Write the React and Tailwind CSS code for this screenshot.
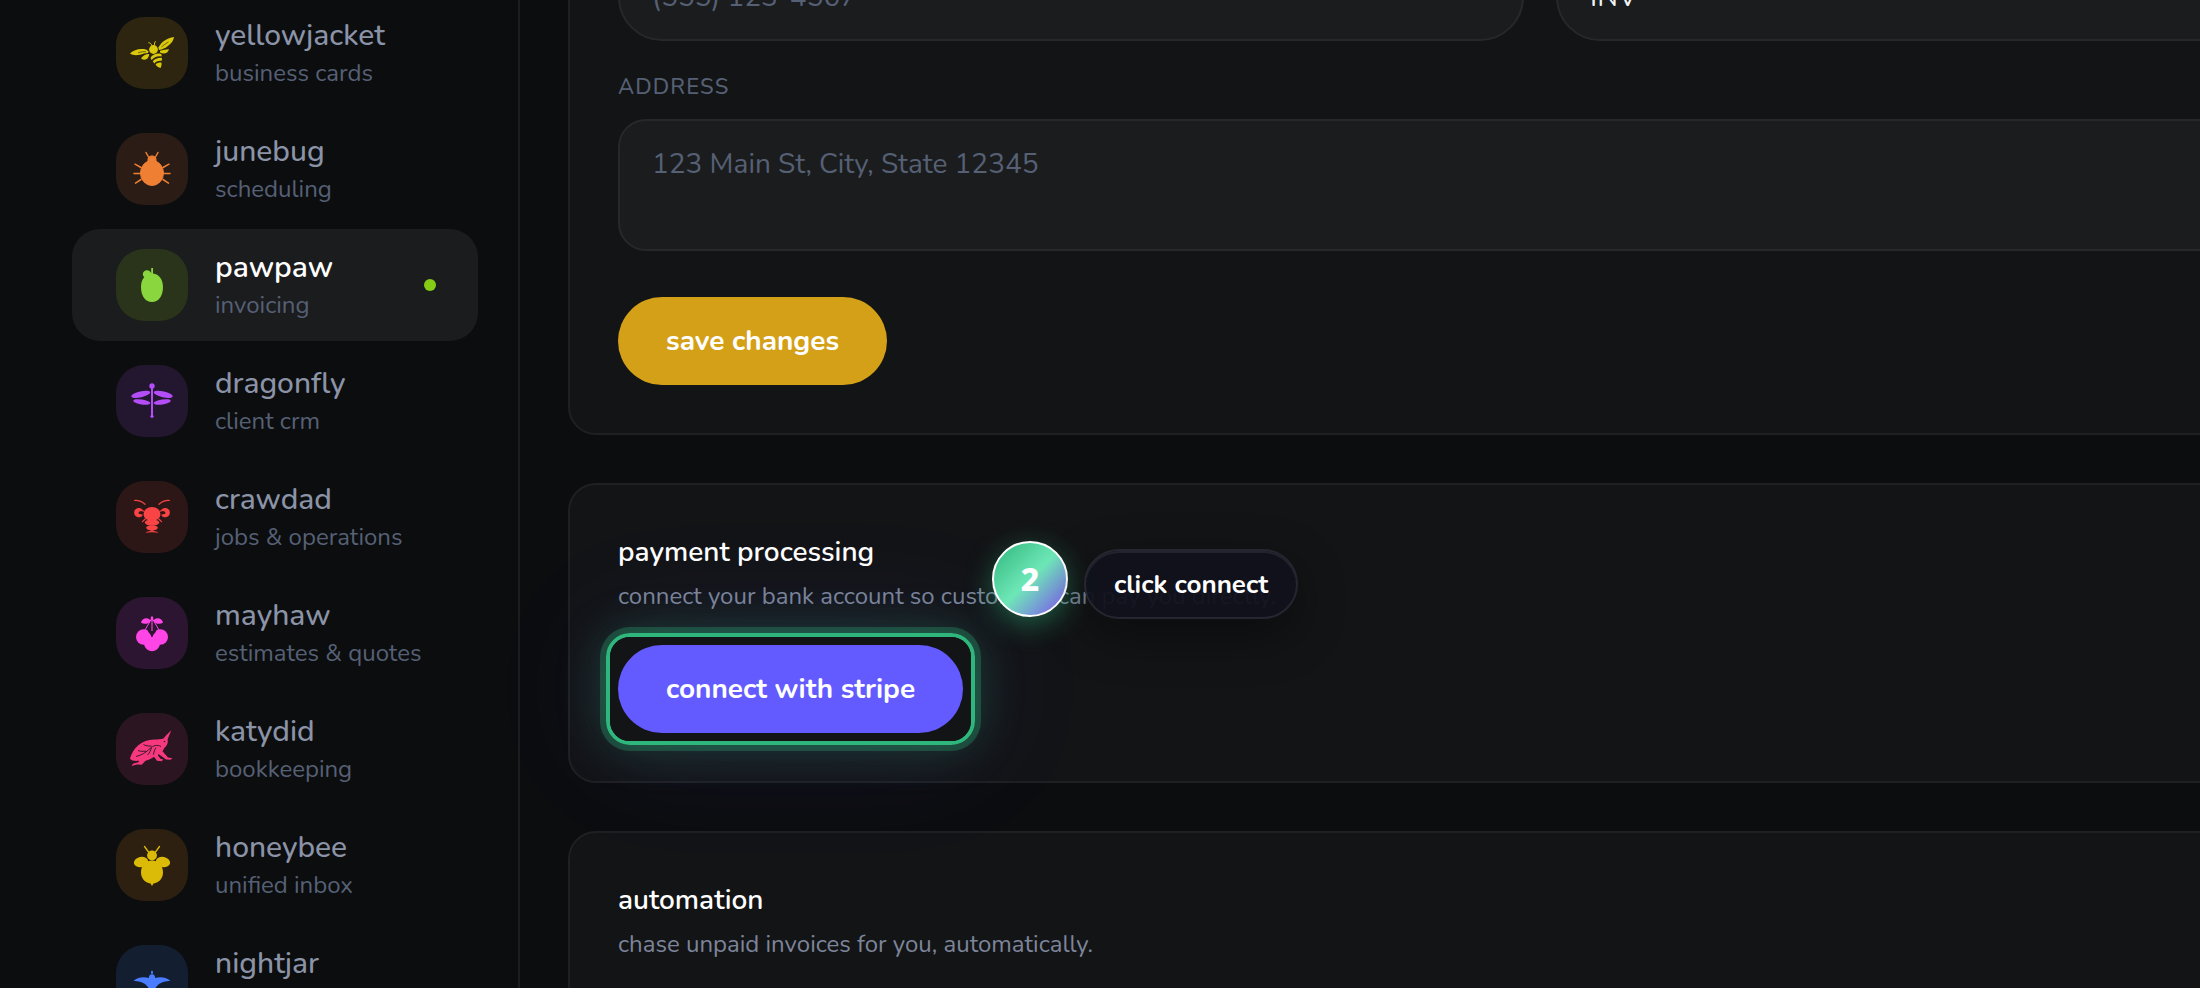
const YellowjacketIcon = () => (
  <svg viewBox="0 0 44 44" className="size-11 fill-[#d9c80c]">
    <circle cx="23.5" cy="18.5" r="4.4" />
    <path d="M0 22.5c4-3.600 9-5.200 16-4l2.500 1.800-.5 1.700-4 .4c-5 2-10.500 2.600-14 .1z" />
    <path d="M11 27.600c1.500-2.800 4.500-4.400 8.200-4.500-.2 4-3.500 7.700-8.200 4.500z" />
    <path d="M44 6c-7 1-12.500 4.500-15.600 10.600l.6 2.400 2.600-.6C37.500 16.200 43 12 44 6z" />
    <path d="M30 19.800c3-.8 6.500-1.600 9-1.500-1 4.200-5.200 5.400-9 3.200z" />
    <path d="M20.500 27c1.500-3 6-5 10-4.200 1.200.6 1.400 1.500 1 2.600-4-.7-7.500.6-9.900 3.600z" />
    <path d="M22.800 30.200c1.700-2.300 5-3.600 8.900-3.400.5 1 .4 2-.1 3-3-.3-5.600.5-7.300 2.700z" />
    <path d="M25.600 33.300c1.300-1.400 3.200-2 5.800-1.900.4 2 0 4-.9 5.500-2-.1-4-1.500-4.900-3.600z" />
    <path d="M22 15c-.5-2-1.600-3-3.600-3.400M24.500 14.500c-.2-2 .2-3.400 1.100-4.300" fill="none" stroke="#d9c80c" />
    <path d="M8 21.800c3-1 5.500-1.300 8-1M31.500 16c2.200-2 4.500-3.800 7-5" fill="none" stroke="#2d2510" strokeWidth=".6" />
  </svg>
);

const JunebugIcon = () => (
  <svg viewBox="0 0 44 44" className="size-11 fill-[#ee7f33] stroke-[#ee7f33]">
    <ellipse cx="22" cy="26" rx="11.500" ry="12.500" />
    <path d="M18 15v-2.500c0-2.200 1.600-3.600 4-3.600s4 1.400 4 3.600V15z" />
    <g fill="none" strokeWidth="1.500" strokeLinecap="round">
      <path d="M18.500 10l-2.500-4.500M25.500 10L28 5.500M11 20.500l-6-3.300M33 20.500l6-3.300M10.500 26.500H4M33.500 26.500H40M11 32.500l-5.500 3.600M33 32.500l5.500 3.600" />
    </g>
  </svg>
);

const PawpawIcon = () => (
  <svg viewBox="0 0 44 44" className="size-11 fill-[#8ad63f]">
    <path d="M21.200 10V5h1.800v5.500c6 .6 10 6 10 13.500 0 9-4.500 15-11 15s-11-6-11-15c0-4.200 1.200-7.600 3.300-10-1.800-1-2-4-.3-5.500 2.200-2.300 6-1.600 7.200 1.500z" />
  </svg>
);

const DragonflyIcon = () => (
  <svg viewBox="0 0 44 44" className="size-11 fill-[#b44df8]">
    <circle cx="22" cy="7" r="2.700" />
    <rect x="21" y="7" width="2" height="31" />
    <circle cx="22" cy="37.300" r="1.600" />
    <ellipse cx="10.800" cy="15.300" rx="9.800" ry="3" transform="rotate(-13 10.800 15.300)" />
    <ellipse cx="33.200" cy="15.300" rx="9.800" ry="3" transform="rotate(13 33.200 15.300)" />
    <ellipse cx="11.800" cy="23" rx="8.700" ry="2.500" transform="rotate(9 11.800 23)" />
    <ellipse cx="32.200" cy="23" rx="8.700" ry="2.500" transform="rotate(-9 32.200 23)" />
  </svg>
);

const CrawdadIcon = () => (
  <svg viewBox="0 0 44 44" className="size-11 fill-[#f84444]">
    <ellipse cx="22" cy="19" rx="8.500" ry="7" />
    <ellipse cx="22" cy="27.500" rx="7.200" ry="3.100" />
    <ellipse cx="22" cy="32.800" rx="5.800" ry="2.600" />
    <path d="M22 35l2.500 1.200c2 .2 3.300.7 4 1.500-4-.7-9-.7-13 0 .7-.8 2-1.300 4-1.500z" />
    <path d="M13 15.500a4.700 4.700 0 1 0 0 4.200l-4.300-1 .1-2z" />
    <path d="M31 15.500a4.700 4.700 0 1 1 0 4.200l4.300-1-.1-2z" />
    <g fill="none" stroke="#f84444" strokeWidth="1.200" strokeLinecap="round">
      <path d="M15 9.300C12 6.500 8.500 5.200 4.500 5.500M29 9.300c3-2.800 6.500-4.100 10.500-3.800M15.200 24l-2.700 2.700M28.800 24l2.700 2.700M12 15.600l2 .6M32 15.600l-2 .6" />
    </g>
  </svg>
);

const MayhawIcon = () => (
  <svg viewBox="0 0 44 44" className="size-11 fill-[#ff45e5]">
    <circle cx="13.700" cy="26" r="7.700" />
    <circle cx="30.300" cy="26" r="7.700" />
    <path d="M14 26h16v6c0 4.500-3.500 8.200-8 8.200S14 36.500 14 32z" />
    <path d="M18 20.500l4 5 4-5-.5-1.500h-7z" fill="#2b1530" />
    <path d="M11 11.800c.5-3.800 5-5.600 8.500-3.600l1 2c-2 2.600-6 3.500-9.500 1.600zM33 11.800c-.5-3.800-5-5.600-8.500-3.600l-1 2c2 2.600 6 3.500 9.500 1.600z" />
    <path d="M21 5.500h2l.5 4h-3z" />
    <path d="M21 8h2v12h-2z" fillOpacity=".55" />
    <path d="M20.800 9L15 19M23.200 9L29 19" stroke="#ff45e5" fill="none" />
  </svg>
);

const KatydidIcon = () => (
  <svg viewBox="0 0 44 44" className="size-11 fill-[#f6397f]">
    <path d="M0 31.500C3 21 12 12.500 24 12.500c4 0 7-.3 9.500-1L36 8.500l5.300-5.300-3.800 9.300c1 3.500-.6 6.500-3 8.300l-2 3.400 5.500 6.300 4.500.8-2 1.500-4.500-.4-7.500-5.400-.5 1.500 2.500 3.300 2.800.7-1.600 1.700-4.700-.4-3-4c-2 1.600-5 3-8.500 4l-3.800 4L7 37.500l-5.500 1.600 1.500-2.400 6-1.700-.3-1.200C5 34 1.500 34 0 31.500z" />
    <g fill="none" stroke="#2b1520" strokeWidth=".9">
      <path d="M6 29.500c6-1.500 10-4 14-8 3.500-3.300 7-4 11-2M13.500 17.500c2 1.300 4.500 1.700 8 1.500M8 23.500c2.500 1 5 1 8 .6M21.500 20.500c-.8 3-2 5.500-4 7.500M26 20.500c-1.500 2-2 4.500-2.500 7" />
    </g>
    <circle cx="34.500" cy="14.500" r=".8" fill="#2b1520" />
  </svg>
);

const HoneybeeIcon = () => (
  <svg viewBox="0 0 44 44" className="size-11 fill-[#dbbb07]">
    <circle cx="22" cy="12.500" r="4.900" />
    <ellipse cx="11" cy="19" rx="7.200" ry="5" transform="rotate(-12 11 19)" />
    <ellipse cx="33" cy="19" rx="7.200" ry="5" transform="rotate(12 33 19)" />
    <path d="M22 17.500c7 0 11 5 11 12 0 6-4 10-9.500 11L22 43l-1.500-2.500C15 39.500 11 35.500 11 29.500c0-7 4-12 11-12z" />
    <path d="M18.500 9L14.500 3.500M25.500 9l4-5.500" fill="none" stroke="#dbbb07" strokeWidth="1.300" strokeLinecap="round" />
  </svg>
);

const NightjarIcon = () => (
  <svg viewBox="0 0 44 44" className="size-11 fill-[#4a7dff]">
    <path d="M22 15.500l1-1.500v-1.200a1 1 0 0 0-2 0V14z" />
    <path d="M22 15.200c2 0 3.200 1.400 3.200 3.800 5-1.300 11-.8 15.300 2.800-5 .6-8.500 1.300-11.500 3.200-1.600 1.300-3 2.800-4 4.500L24 40h-4l-1-10.500c-1-1.700-2.400-3.200-4-4.500-3-1.900-6.500-2.600-11.500-3.200 4.300-3.600 10.300-4.100 15.300-2.800 0-2.400 1.200-3.800 3.200-3.800z" />
  </svg>
);

const apps = [
  { name: "yellowjacket", desc: "business cards", Icon: YellowjacketIcon, tile: "bg-[#2d2510]" },
  { name: "junebug", desc: "scheduling", Icon: JunebugIcon, tile: "bg-[#2c1c16]" },
  { name: "pawpaw", desc: "invoicing", Icon: PawpawIcon, tile: "bg-[#29341b]", active: true },
  { name: "dragonfly", desc: "client crm", Icon: DragonflyIcon, tile: "bg-[#22172f]" },
  { name: "crawdad", desc: "jobs & operations", Icon: CrawdadIcon, tile: "bg-[#2d1616]" },
  { name: "mayhaw", desc: "estimates & quotes", Icon: MayhawIcon, tile: "bg-[#2b1530]" },
  { name: "katydid", desc: "bookkeeping", Icon: KatydidIcon, tile: "bg-[#2b1520]" },
  { name: "honeybee", desc: "unified inbox", Icon: HoneybeeIcon, tile: "bg-[#2d2010]" },
  { name: "nightjar", desc: "", Icon: NightjarIcon, tile: "bg-[#131e30]" },
];

function AppLink({ name, desc, Icon, tile, active }) {
  return (
    <a
      href={"#" + name}
      aria-current={active ? "page" : undefined}
      className={
        "flex h-28 shrink-0 items-center rounded-[28px] pr-[42px] pl-11 " + (active ? "bg-[#1b1c1e]" : "")
      }
    >
      <span className={"flex size-[72px] shrink-0 items-center justify-center rounded-[28px] " + tile}>
        <Icon />
      </span>
      <span className="ml-[27px] flex flex-1 flex-col">
        <span className={"text-[30px] leading-10 " + (active ? "font-semibold text-white" : "font-medium text-[#8b93a7]")}>
          {name}
        </span>
        <span className="h-[34px] text-[24px] leading-[34px] text-[#566075]">{desc}</span>
      </span>
      {active && <span className="size-3 rounded-full bg-[#84cc16]" />}
    </a>
  );
}

const card = "rounded-[28px] border-2 border-[#1f2022] bg-[#131416] p-12";
const field =
  "w-full border-2 border-[#27282a] bg-[#1b1c1e] px-8 text-[28px] text-[#f1f3f5] placeholder:text-[#566075] outline-none";
const label = "block text-[22px] leading-8 font-medium tracking-wider text-[#566075] uppercase";

function CardHeading({ title, children }) {
  return (
    <>
      <h2 className="text-[28px] leading-[38px] font-semibold text-white">{title}</h2>
      <p className="mt-1.5 text-[24px] leading-[38px] whitespace-nowrap text-[#7d859a]">{children}</p>
    </>
  );
}

export default function App() {
  return (
    <div className="flex h-screen overflow-hidden bg-[#0c0d0f] font-['Nunito','Noto_Sans',sans-serif]">
      <aside className="w-[520px] shrink-0 overflow-hidden border-r-2 border-[#1c1d1f] pr-10 pl-[72px]">
        <nav className="-mt-[3px] flex flex-col gap-1">
          {apps.map((app) => (
            <AppLink key={app.name} {...app} />
          ))}
        </nav>
      </aside>

      <main className="-mt-[145px] -mr-[312px] flex flex-1 flex-col gap-12 pl-12">
        <section className={card}>
          <div className="grid grid-cols-2 gap-8">
            <div>
              <label htmlFor="phone" className={label}>Phone</label>
              <input id="phone" placeholder="(555) 123-4567" className={field + " mt-4 h-[88px] rounded-full"} />
            </div>
            <div>
              <label htmlFor="prefix" className={label}>Invoice prefix</label>
              <input id="prefix" defaultValue="INV" className={field + " mt-4 h-[88px] rounded-full"} />
            </div>
          </div>
          <label htmlFor="address" className={label + " mt-[30px]"}>Address</label>
          <textarea
            id="address"
            placeholder="123 Main St, City, State 12345"
            className={field + " mt-4 block h-[132px] resize-none rounded-[28px] py-[22px] leading-[42px]"}
          />
          <button className="mt-[46px] h-[88px] rounded-full bg-[#d4a017] px-12 text-[28px] font-bold text-white">
            save changes
          </button>
        </section>

        <section className={card}>
          <CardHeading title="payment processing">
            connect your bank account so customers can pay you directly.
          </CardHeading>
          <div className="relative mt-[30px] w-fit">
            <div className="pointer-events-none absolute -inset-3 rounded-3xl border-4 border-[#2fb67c] shadow-[0_0_0_6px_rgba(47,182,124,0.28),0_0_48px_rgba(47,182,124,0.28),0_0_120px_rgba(99,91,255,0.14)]" />
            <div className="pointer-events-none absolute -inset-2 rounded-[20px] bg-[#131416]" />
            <button className="relative h-[88px] rounded-full bg-[#635bff] px-12 text-[28px] font-bold text-white">
              connect with stripe
            </button>
            <div className="absolute bottom-[114px] left-[374px] flex items-end gap-4">
              <span className="mb-0.5 flex size-[76px] items-center justify-center rounded-full border-2 border-white bg-[linear-gradient(135deg,#2fb67c_0%,#6ee7b7_50%,#7c6fe8_90%)] font-['Noto_Sans',sans-serif] text-[32px] font-extrabold text-white shadow-[0_8px_28px_rgba(47,182,124,0.45)]">
                2
              </span>
              <span className="flex h-[70px] items-center rounded-full border-2 border-[#25262f] bg-[#10111b]/95 px-7 text-[26px] font-bold whitespace-nowrap text-white shadow-[inset_0_2px_0_rgba(255,255,255,0.08),0_16px_48px_rgba(0,0,0,0.4)]">
                click connect
              </span>
            </div>
          </div>
        </section>

        <section className={card}>
          <CardHeading title="automation">chase unpaid invoices for you, automatically.</CardHeading>
        </section>
      </main>
    </div>
  );
}
